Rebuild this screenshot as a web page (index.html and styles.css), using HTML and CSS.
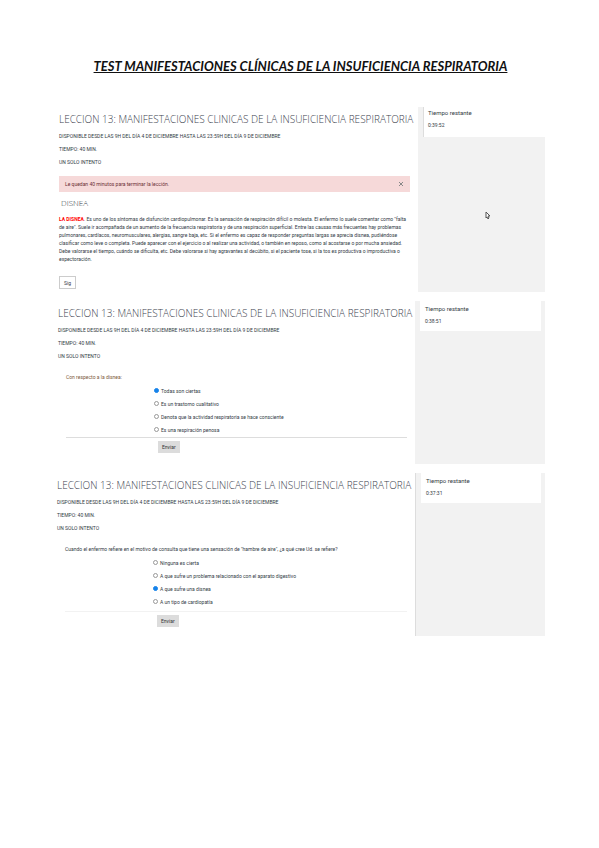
FILE: index.html
```html
<!DOCTYPE html>
<html lang="es">
<head>
    <meta charset="UTF-8">
    <meta name="viewport" content="width=device-width, initial-scale=1.0">
    <title>Test manifestaciones clínicas de la insuficiencia respiratoria</title>
    <link rel="stylesheet" href="styles.css">
</head>
<body>
    <h1 class="doc-title">TEST MANIFESTACIONES CLÍNICAS DE LA INSUFICIENCIA RESPIRATORIA</h1>

    <!-- lesson intro -->
    <section class="capture capture-intro">
        <div class="lesson">
            <h2>LECCION 13: MANIFESTACIONES CLINICAS DE LA INSUFICIENCIA RESPIRATORIA</h2>
            <p class="info">DISPONIBLE DESDE LAS 9H DEL DÍA 4 DE DICIEMBRE HASTA LAS 23:59H DEL DÍA 9 DE DICIEMBRE</p>
            <p class="info">TIEMPO: 40 MIN.</p>
            <p class="info">UN SOLO INTENTO</p>
            <div class="alert">
                <span>Le quedan 40 minutos para terminar la lección.</span>
                <button type="button" class="close" aria-label="Cerrar">
                    <svg viewBox="0 0 6 6" width="6" height="6"><path d="M1 1L5 5M5 1L1 5"/></svg>
                </button>
            </div>
            <h3>DISNEA</h3>
            <p class="reading">
                <b>LA DISNEA</b>. Es uno de los síntomas de disfunción cardiopulmonar. Es la sensación de respiración difícil o molesta. El enfermo lo suele comentar como "falta<br>
                de aire". Suele ir acompañada de un aumento de la frecuencia respiratoria y de una respiración superficial. Entre las causas más frecuentes hay problemas<br>
                pulmonares, cardíacos, neuromusculares, alergias, sangre baja, etc. Si el enfermo es capaz de responder preguntas largas se aprecia disnea, pudiéndose<br>
                clasificar como leve o completa. Puede aparecer con el ejercicio o al realizar una actividad, o también en reposo, como al acostarse o por mucha ansiedad.<br>
                Debe valorarse el tiempo, cuándo se dificulta, etc. Debe valorarse si hay agravantes al decúbito, si el paciente tose, si la tos es productiva o improductiva o<br>
                expectoración.
            </p>
            <button type="button" class="btn-next">Sig</button>
        </div>
        <aside class="side">
            <div class="timer">
                <h4>Tiempo restante</h4>
                <p>0:39:52</p>
            </div>
            <svg class="cursor" viewBox="0 0 6 9" width="6" height="9"><path d="M1 1V7L2 6L3 8L4 7L3 5H5Z"/></svg>
        </aside>
    </section>

    <section class="capture capture-first">
        <div class="lesson">
            <h2>LECCION 13: MANIFESTACIONES CLINICAS DE LA INSUFICIENCIA RESPIRATORIA</h2>
            <p class="info">DISPONIBLE DESDE LAS 9H DEL DÍA 4 DE DICIEMBRE HASTA LAS 23:59H DEL DÍA 9 DE DICIEMBRE</p>
            <p class="info">TIEMPO: 40 MIN.</p>
            <p class="info">UN SOLO INTENTO</p>
            <form class="question">
                <fieldset>
                    <legend>Con respecto a la disnea:</legend>
                    <label><input type="radio" name="q1" checked> Todas son ciertas</label>
                    <label><input type="radio" name="q1"> Es un trastorno cualitativo</label>
                    <label><input type="radio" name="q1"> Denota que la actividad respiratoria se hace consciente</label>
                    <label><input type="radio" name="q1"> Es una respiración penosa</label>
                </fieldset>
                <div class="send"><button type="button">Enviar</button></div>
            </form>
        </div>
        <aside class="side">
            <div class="timer">
                <h4>Tiempo restante</h4>
                <p>0:38:51</p>
            </div>
        </aside>
    </section>

    <section class="capture capture-second">
        <div class="lesson">
            <h2>LECCION 13: MANIFESTACIONES CLINICAS DE LA INSUFICIENCIA RESPIRATORIA</h2>
            <p class="info">DISPONIBLE DESDE LAS 9H DEL DÍA 4 DE DICIEMBRE HASTA LAS 23:59H DEL DÍA 9 DE DICIEMBRE</p>
            <p class="info">TIEMPO: 40 MIN.</p>
            <p class="info">UN SOLO INTENTO</p>
            <form class="question">
                <fieldset>
                    <legend>Cuando el enfermo refiere en el motivo de consulta que tiene una sensación de "hambre de aire", ¿a qué cree Ud. se refiere?</legend>
                    <label><input type="radio" name="q2"> Ninguna es cierta</label>
                    <label><input type="radio" name="q2"> A que sufre un problema relacionado con el aparato digestivo</label>
                    <label><input type="radio" name="q2" checked> A que sufre una disnea</label>
                    <label><input type="radio" name="q2"> A un tipo de cardiopatía</label>
                </fieldset>
                <div class="send"><button type="button">Enviar</button></div>
            </form>
        </div>
        <aside class="side">
            <div class="timer">
                <h4>Tiempo restante</h4>
                <p>0:37:31</p>
            </div>
        </aside>
    </section>
</body>
</html>
```
FILE: styles.css
```css
* {
    box-sizing: border-box;
}

body {
    margin: 0;
    padding: 56px 54px 40px 56px;
    background: #fff;
    color: #333b45;
    font-family: Roboto, "Open Sans", sans-serif;
    font-size: 5px;
}

h1, h2, h3, h4, p {
    margin: 0;
    font-weight: normal;
}

.doc-title {
    margin-bottom: 31px;
    color: #111;
    font: italic bold 13px/20px Lato, sans-serif;
    text-align: center;
    white-space: nowrap;
    text-decoration: underline;
}

/* lesson on the left, timer column on the right */
.capture {
    display: grid;
    grid-template-columns: 1fr 130px;
    column-gap: 8px;
    margin-bottom: 9px;
}
.capture-intro {
    grid-template-columns: 1fr 127px;
    min-height: 185px;
}
.capture-first {
    min-height: 163px;
}
.capture-second {
    min-height: 163px;
}

.lesson {
    min-width: 0;
    padding: 4px 0 0 2px;
}
.capture-intro .lesson {
    padding-left: 3px;
}
.capture-second .lesson {
    padding-left: 1px;
}

h2 {
    margin-bottom: 3px;
    color: #3d4450;
    font-family: "Open Sans", sans-serif;
    font-size: 10px;
    font-weight: 300;
    line-height: 16px;
    white-space: nowrap;
}

.info {
    line-height: 13px;
    white-space: nowrap;
}

.alert {
    display: flex;
    align-items: center;
    justify-content: space-between;
    height: 16px;
    margin: 7px 0 4px;
    padding: 0 6px;
    background: #f6d9d9;
    color: #6b3036;
}
.close {
    display: flex;
    padding: 0;
    border: 0;
    background: none;
}
.close path {
    stroke: #888;
    fill: none;
}

h3 {
    padding-left: 2px;
    font-family: "Open Sans", sans-serif;
    font-size: 8px;
    font-weight: 300;
    line-height: 14px;
}

.reading {
    margin-top: 5px;
    line-height: 8px;
    white-space: nowrap;
}
.reading b {
    color: #f00;
}

.btn-next {
    height: 13px;
    margin-top: 13px;
    padding: 0 4px;
    border: 1px solid #ccc;
    background: #fff;
    color: inherit;
    font: inherit;
}

.side {
    padding: 0 4px 0 5px;
    background: #f2f2f2;
}
.capture-intro .side {
    padding-right: 0;
}
.capture-second .side {
    border-left: 1px solid #ddd;
}
.timer {
    height: 30px;
    padding: 3px 5px;
    background: #fff;
}
.capture-intro .timer {
    padding: 1px 4px;
    border-left: 1px solid #ddd;
}
.timer h4 {
    font-size: 6px;
    line-height: 10px;
}
.timer p {
    line-height: 15px;
}
.cursor {
    display: block;
    margin: 74px 0 0 62px;
    fill: #fff;
    stroke: #555;
}

.question {
    padding: 8px 0 0 8px;
}
fieldset {
    margin: 0;
    padding: 0 0 3px;
    border: 0;
    border-bottom: 1px solid #ddd;
}
.capture-first fieldset {
    padding-bottom: 1px;
}
.capture-second fieldset {
    border-color: #f2f2f2;
}
legend {
    padding: 0;
    line-height: 13px;
    white-space: nowrap;
}
.capture-first legend {
    color: #7d5a3c;
}
fieldset label {
    display: flex;
    align-items: center;
    gap: 2px;
    height: 13px;
    padding-left: 88px;
    white-space: nowrap;
}
fieldset input {
    appearance: none;
    width: 5px;
    height: 5px;
    margin: 0;
    border: 1px solid #999;
    border-radius: 50%;
}
fieldset input:checked {
    border-color: #1683ea;
    background: #1683ea;
}
.send {
    padding: 3px 0 0 92px;
}
.send button {
    height: 12px;
    padding: 0 4px;
    border: 0;
    background: #dcdcdc;
    color: #333;
    font: inherit;
}
```
